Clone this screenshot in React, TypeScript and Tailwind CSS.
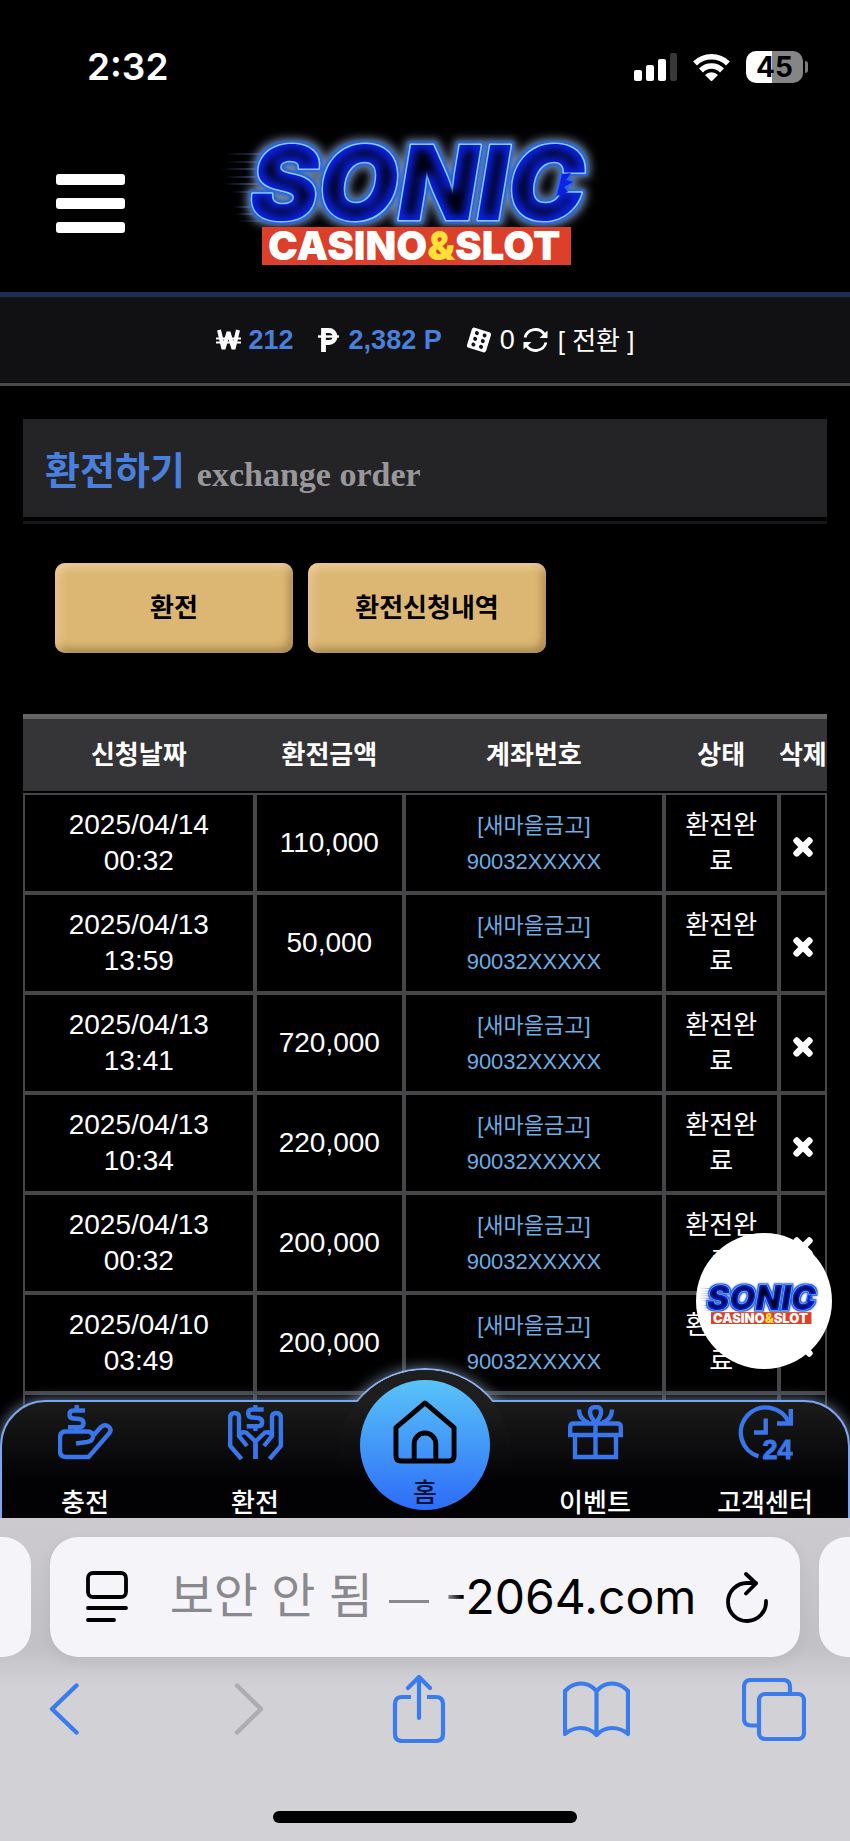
import React, { useId } from 'react';
import { FaTimes } from 'react-icons/fa';

const rows = [
  { date: '2025/04/14', time: '00:32', amount: '110,000' },
  { date: '2025/04/13', time: '13:59', amount: '50,000' },
  { date: '2025/04/13', time: '13:41', amount: '720,000' },
  { date: '2025/04/13', time: '10:34', amount: '220,000' },
  { date: '2025/04/13', time: '00:32', amount: '200,000' },
  { date: '2025/04/10', time: '03:49', amount: '200,000' },
];

function Logo({ className }: { className: string }) {
  const id = useId();
  return (
    <svg viewBox="0 0 400 144" className={className} role="img" aria-label="SONIC CASINO&SLOT">
      <defs>
        <filter id={`${id}neon`} x="-10%" y="-30%" width="120%" height="160%" colorInterpolationFilters="sRGB">
          <feMorphology in="SourceAlpha" operator="dilate" radius="4" />
          <feGaussianBlur stdDeviation="4" result="haloShape" />
          <feFlood floodColor="#6f829f" />
          <feComposite in2="haloShape" operator="in" result="halo" />
          <feMorphology in="SourceAlpha" operator="dilate" radius="2" />
          <feGaussianBlur stdDeviation="1" result="rimShape" />
          <feFlood floodColor="#2b68e0" />
          <feComposite in2="rimShape" operator="in" result="rim" />
          <feMorphology in="SourceAlpha" operator="erode" radius="6" />
          <feGaussianBlur stdDeviation="4" result="coreShape" />
          <feFlood floodColor="#00000f" />
          <feComposite in2="coreShape" operator="in" result="core" />
          <feMerge>
            <feMergeNode in="halo" />
            <feMergeNode in="rim" />
            <feMergeNode in="SourceGraphic" />
            <feMergeNode in="core" />
          </feMerge>
        </filter>
        <linearGradient id={`${id}streak`}>
          <stop offset="0" stopColor="#3b4a86" stopOpacity="0" />
          <stop offset="1" stopColor="#3b4a86" />
        </linearGradient>
      </defs>
      <g fill={`url(#${id}streak)`}>
        <rect x="0" y="31" width="50" height="2" />
        <rect x="2" y="39" width="44" height="2" />
        <rect x="-4" y="46" width="44" height="2" />
        <rect x="0" y="54" width="38" height="2" />
        <rect x="-2" y="61" width="36" height="2" />
        <rect x="6" y="69" width="30" height="2" />
        <rect x="8" y="84" width="20" height="2" />
        <rect x="10" y="91" width="20" height="2" />
        <rect x="12" y="98" width="40" height="2" />
      </g>
      <g filter={`url(#${id}neon)`} fill="#0c22e6" stroke="#8fd6ff" strokeWidth="3" strokeLinejoin="round" style={{ paintOrder: 'stroke' }}>
        <text x="25" y="98" fontSize="103" fontWeight="900" fontStyle="italic" fontFamily="Inter, sans-serif">SONIC</text>
        <path d="M337 52l9-1-5 7 7 2-9 5 4 5-11 4z" stroke="none" />
      </g>
      <rect x="37" y="105" width="309" height="38" fill="#dc3f2a" />
      <text x="43" y="138" fontSize="40" fontWeight="900" fontFamily="Inter, sans-serif" fill="#fff">
        CASINO<tspan fill="#ffdf3a">&amp;</tspan>SLOT
      </text>
    </svg>
  );
}

function StatusBar() {
  return (
    <div className="flex h-[134px] items-center justify-between pl-[87px] pr-[42px] text-white">
      <time className="font-['Inter',sans-serif] text-[37px] font-semibold leading-10">2:32</time>
      <div className="flex items-center gap-4">
        <svg width="43" height="28" viewBox="0 0 43 28" fill="#fff">
          <rect x="0" y="17" width="8" height="11" rx="2" />
          <rect x="12" y="12" width="8" height="16" rx="2" />
          <rect x="24" y="6" width="8" height="22" rx="2" />
          <rect x="36" y="0" width="7" height="28" rx="2" fill="#38383a" />
        </svg>
        <svg width="37" height="28" viewBox="0 0 37 28" fill="none" stroke="#fff" strokeWidth="5.500">
          <path d="M2 10.500a23.500 23.500 0 0 1 33 0" />
          <path d="M8 17.500a14.500 14.500 0 0 1 21 0" />
          <path d="M12 22a9 9 0 0 1 13 0L18.500 28.500z" fill="#fff" stroke="none" />
        </svg>
        <div className="flex items-center gap-0.5">
          <span className="flex h-8 w-[57px] items-center justify-center rounded-[10px] bg-[linear-gradient(90deg,#fff_46%,#858585_46%)] font-['Inter',sans-serif] text-[28px] font-bold leading-8 text-black">45</span>
          <span className="h-3 w-[3px] rounded-r-full bg-[#7c7c7c]" />
        </div>
      </div>
    </div>
  );
}

function WonIcon() {
  return (
    <svg width="25" height="22" viewBox="0 0 25 22" fill="none" stroke="#fff">
      <path d="M3 1l4.500 19L12.500 3l5 17L22 1" strokeWidth="4" strokeLinejoin="bevel" />
      <path d="M0 9.500h25M0 13.500h25" strokeWidth="1.800" />
    </svg>
  );
}

function PesoIcon() {
  return (
    <svg width="21" height="24" viewBox="0 0 21 24" fill="none" stroke="#fff">
      <path d="M5.500 24V2.500H11a5 5 0 0 1 0 12H5.500" strokeWidth="4.800" />
      <path d="M0 8.500h21" strokeWidth="2.400" />
    </svg>
  );
}

function DiceIcon() {
  return (
    <svg width="26" height="26" viewBox="0 0 26 26">
      <g transform="rotate(17 13 13)">
        <rect x="3" y="2.500" width="20" height="21" rx="2.500" fill="#fff" />
        <g fill="#111013">
          <circle cx="9" cy="7" r="2" /><circle cx="17" cy="7" r="2" />
          <circle cx="9" cy="13" r="2" /><circle cx="17" cy="13" r="2" />
          <circle cx="9" cy="19" r="2" /><circle cx="17" cy="19" r="2" />
        </g>
      </g>
    </svg>
  );
}

function SyncIcon() {
  return (
    <svg width="25" height="24" viewBox="0 0 25 24" fill="none" stroke="#fff" strokeWidth="2.800">
      <path d="M2 9.500A10.800 10.800 0 0 1 21.500 6.500" />
      <path d="M23 14.500A10.800 10.800 0 0 1 3.500 17.500" />
      <path d="M24.500 2.500V10H16.500z" fill="#fff" stroke="none" />
      <path d="M.5 21.500V14H8.500z" fill="#fff" stroke="none" />
    </svg>
  );
}

const dollar =
  'M18.700 0v4M18.700 22v5M27 5.500H15.500q-4 0-4 4t4 4l6 .5q4 .5 4 4.200t-4 4H10';

function DepositIcon() {
  return (
    <svg width="55" height="55" viewBox="0 0 55 55" fill="none" stroke="#3976ea" strokeWidth="4.400">
      <path d={dollar} />
      <path d="M18 38.500l11-1.500q6-1 6-5.500t-5-5H8q-6 0-6 6V46q0 6 6 6h22.500L51.500 28q2.500-4-1-6.500t-7.500.5L34 32" />
    </svg>
  );
}

function WithdrawIcon() {
  const hand = 'M13.500 54L2.200 41V12.500q0-4.500 4.500-4.500t4.300 4.500V31L19 41M11 31q2-5 7-3.500l9.500 9V54';
  return (
    <svg width="55" height="55" viewBox="0 0 55 55" fill="none" stroke="#3976ea" strokeWidth="4.400">
      <path d={dollar} transform="translate(8.700 -1)" />
      <path d={hand} />
      <path d={hand} transform="matrix(-1 0 0 1 55 0)" />
    </svg>
  );
}

function GiftIcon() {
  return (
    <svg width="55" height="55" viewBox="0 0 55 55" fill="none" stroke="#3976ea" strokeWidth="4.400">
      <path d="M2.200 30V22q0-3.500 3.500-3.500h43.600q3.500 0 3.500 3.500v8zM7 31v21h41V31M27.500 19v33" />
      <path d="M27.500 17.500q-5.500-6-5.500-10.500t5.500-5 5.500 5-5.500 10.500M11 4.500q0 10 9.500 13M44 4.500q0 10-9.500 13" />
    </svg>
  );
}

function SupportIcon() {
  return (
    <svg width="55" height="55" viewBox="0 0 55 55" fill="none" stroke="#3976ea" strokeWidth="4.400">
      <path d="M20.500 51.300A25 25 0 1 1 51 18M52.800 4v14.500H39M27.700 13.500v14H16" />
      <text x="24.500" y="54" fontSize="27" fontWeight="700" fontFamily="Liberation Sans, sans-serif" fill="#3976ea" stroke="#3976ea" strokeWidth="1">24</text>
    </svg>
  );
}

const navLabel = 'text-[26px] font-medium leading-[30px] text-white';

function NavItem({ label, children }: { label: string; children: React.ReactNode }) {
  return (
    <a href="#" className="flex flex-1 flex-col items-center justify-between pt-[5px]">
      {children}
      <span className={navLabel}>{label}</span>
    </a>
  );
}

function BottomNav() {
  return (
    <nav className="absolute inset-x-0 bottom-0 h-[118px]">
      <div className="absolute -inset-x-4 -top-16 bottom-0 overflow-hidden px-4">
        <div className="absolute left-1/2 top-8 size-[178px] -translate-x-1/2 rounded-full border-2 border-[#8fb2ee] shadow-[0_0_14px_#6f7f98]" />
        <div className="relative mt-16 h-[160px] rounded-t-[46px] border-2 border-[#7ea6ee] bg-[linear-gradient(#1b1b1c,#020204_80px)] shadow-[0_0_14px_#6f7f98]" />
        <div className="absolute left-1/2 top-[34px] size-[174px] -translate-x-1/2 rounded-full bg-[linear-gradient(#1e1e1f_32px,#020204_112px)]" />
      </div>
      <div className="relative flex h-full">
        <NavItem label="충전"><DepositIcon /></NavItem>
        <NavItem label="환전"><WithdrawIcon /></NavItem>
        <div className="flex flex-1 justify-center">
          <a href="#" className="-mt-5 flex size-[130px] flex-col items-center rounded-full bg-[linear-gradient(#59c4f8,#2d6cf8)] pt-5 text-black">
            <svg width="64" height="65" viewBox="0 0 64 65" fill="none" stroke="#000" strokeWidth="5" strokeLinejoin="round">
              <path d="M2.500 28L32 3l29.500 25v29q0 5-5 5h-49q-5 0-5-5z" />
              <path d="M21 62V44.500a11 11 0 0 1 22 0V62" />
            </svg>
            <span className="mt-3 text-[26px] font-medium leading-[34px] text-[#061238]">홈</span>
          </a>
        </div>
        <NavItem label="이벤트"><GiftIcon /></NavItem>
        <NavItem label="고객센터"><SupportIcon /></NavItem>
      </div>
    </nav>
  );
}

function BrowserBar() {
  const tool = 'flex h-[68px] w-[68px] items-center justify-center';
  return (
    <footer className="relative flex h-[323px] shrink-0 flex-col overflow-hidden bg-[#d2d1d5] bg-[linear-gradient(#cdcbcf,#c2c1c5_110px,#c2c1c5_130px,#d2d1d5_170px)] pt-[19px]">
      <div className="flex h-[120px] gap-[19px]">
        <div className="w-[31px] rounded-r-[28px] bg-[#f5f4f9]" />
        <div className="flex min-w-0 flex-1 items-center rounded-[28px] bg-[#f5f4f9] pl-9 pr-8 shadow-[0_4px_14px_rgba(0,0,0,0.06)]">
          <button type="button" aria-label="Page menu">
            <svg width="42" height="52" viewBox="0 0 42 52" fill="none" stroke="#000" strokeWidth="3.800" strokeLinecap="round">
              <rect x="2" y="2" width="38" height="24" rx="5" />
              <path d="M2 37h38M2 49h26" />
            </svg>
          </button>
          <div className="flex flex-1 items-center justify-center gap-4 whitespace-nowrap pl-3 text-[48px] leading-[60px]">
            <span className="text-[#8a898e]">보안 안 됨</span>
            <span className="h-[3px] w-10 translate-y-1 bg-[#8a898e]" />
            <span className="font-['Inter',sans-serif] text-black"><span className="bg-linear-to-r from-[#b0b0b3] to-black bg-clip-text text-transparent">-</span>2064.com</span>
          </div>
          <button type="button" aria-label="Reload">
            <svg width="42" height="52" viewBox="0 0 42 52" fill="none" stroke="#000" strokeWidth="3.800" strokeLinecap="round" strokeLinejoin="round">
              <path d="M40 30A19 19 0 1 1 21 12h9M20 3l10 9.500L20 22.500" />
            </svg>
          </button>
        </div>
        <div className="w-[31px] rounded-l-[28px] bg-[#f5f4f9]" />
      </div>
      <div className="flex items-center justify-between pl-[30px] pr-[42px] pt-[18px]">
        <button type="button" aria-label="Back" className={tool}>
          <svg width="30" height="52" viewBox="0 0 30 52" fill="none" stroke="#3b7cec" strokeWidth="4.400" strokeLinecap="round" strokeLinejoin="round"><path d="M27.500 2.500L3 26l24.500 23.500" /></svg>
        </button>
        <button type="button" aria-label="Forward" className={tool}>
          <svg width="44" height="52" viewBox="0 0 44 52" fill="none" stroke="#adacb0" strokeWidth="4.400" strokeLinecap="round" strokeLinejoin="round"><path d="M17 2.500L41 26 17 49.500" /></svg>
        </button>
        <button type="button" aria-label="Share" className={tool}>
          <svg width="54" height="68" viewBox="0 0 54 68" fill="none" stroke="#3b7cec" strokeWidth="4.200" strokeLinejoin="round">
            <path d="M19 22H10q-7 0-7 7v30q0 7 7 7h34q7 0 7-7V29q0-7-7-7h-9" />
            <path d="M27 43V3M16 13L27 2l11 11" strokeLinecap="round" />
          </svg>
        </button>
        <button type="button" aria-label="Bookmarks" className={tool}>
          <svg width="67" height="56" viewBox="0 0 67 56" fill="none" stroke="#3b7cec" strokeWidth="4.200" strokeLinecap="round" strokeLinejoin="round">
            <path d="M33.500 10Q27 2.500 18 2.500T2 10V53q7-6 16-6t15.500 7Q40 47 49 47t16 6V10q-7-7.500-16-7.500T33.500 10V54" />
          </svg>
        </button>
        <button type="button" aria-label="Tabs" className={tool}>
          <svg width="64" height="63" viewBox="0 0 64 63" fill="none" stroke="#3b7cec" strokeWidth="4.200">
            <rect x="17" y="16" width="45" height="45" rx="6" />
            <path d="M17 47.500H9q-7 0-7-7V9q0-7 7-7h32q7 0 7 7v7" />
          </svg>
        </button>
      </div>
      <div className="mx-auto mt-[68px] h-3 w-[304px] rounded-full bg-black" />
    </footer>
  );
}

export default function App() {
  const th = 'h-[79px] border-b-2 border-t-[5px] border-b-black border-t-[#656467] bg-[#353437] p-0 text-[26px] font-bold leading-9';
  const td = 'h-[100px] border-2 border-[#464548] p-0';
  const goldButton =
    "h-[90px] w-[238px] rounded-[10px] bg-[#dcb774] text-[26px] font-bold leading-9 text-black shadow-[inset_3px_4px_8px_rgba(255,225,190,0.6),inset_-3px_-4px_8px_rgba(110,80,30,0.55)]";
  return (
    <div className="flex h-screen flex-col overflow-hidden bg-black font-['Liberation_Sans','Noto_Sans_CJK_KR',sans-serif]">
      <div className="relative flex min-h-0 flex-1 flex-col overflow-hidden">
        <StatusBar />
        <header className="relative flex h-[163px] shrink-0 justify-center border-b-[5px] border-[#1c2b57]">
          <button type="button" aria-label="Menu" className="absolute left-14 top-10 flex flex-col gap-[13px]">
            <span className="h-[11px] w-[69px] rounded-[3px] bg-white" />
            <span className="h-[11px] w-[69px] rounded-[3px] bg-white" />
            <span className="h-[11px] w-[69px] rounded-[3px] bg-white" />
          </button>
          <Logo className="-mt-3 h-[144px] w-[400px] overflow-visible" />
        </header>
        <div className="flex h-[89px] shrink-0 items-center justify-center border-b-[3px] border-[#48474a] bg-[#111013] text-[27px] leading-9 text-white">
          <WonIcon />
          <b className="ml-2 mr-6 text-[#4a80dd]">212</b>
          <PesoIcon />
          <b className="ml-2.5 mr-6 text-[#4a80dd]">2,382 P</b>
          <DiceIcon />
          <span className="mx-2">0</span>
          <SyncIcon />
          <button type="button" className="ml-2.5 pt-0.5 text-[26px]">[ 전환 ]</button>
        </div>
        <main className="px-[23px] pt-[33px] text-white">
          <div className="border-b-[3px] border-[#161518] pb-1">
            <h1 className="flex h-[98px] items-center gap-3 bg-[#242326] pl-[22px] pt-1.5 text-[38px] font-bold leading-[52px] text-[#4a80dd]">
              환전하기
              <small className="mt-2 font-['Liberation_Serif',serif] text-[34px] leading-10 text-[#98979a]">exchange order</small>
            </h1>
          </div>
          <div className="mt-[39px] flex gap-[15px] pl-8">
            <button type="button" className={goldButton}>환전</button>
            <button type="button" className={goldButton}>환전신청내역</button>
          </div>
          <table className="mt-[61px] w-full table-fixed border-separate border-spacing-0 text-center">
            <colgroup>
              <col className="w-[28.800%]" />
              <col className="w-[18.600%]" />
              <col className="w-[32.300%]" />
              <col className="w-[14.300%]" />
              <col className="w-[6%]" />
            </colgroup>
            <thead>
              <tr>
                <th className={th}>신청날짜</th>
                <th className={th}>환전금액</th>
                <th className={th}>계좌번호</th>
                <th className={th}>상태</th>
                <th className={`${th} whitespace-nowrap`}>삭제</th>
              </tr>
            </thead>
            <tbody>
              {rows.map((row) => (
                <tr key={row.date + row.time}>
                  <td className={`${td} text-[28px] leading-9`}>{row.date}<br />{row.time}</td>
                  <td className={`${td} text-[28px] leading-9`}>{row.amount}</td>
                  <td className={`${td} pt-0.5 text-[22px] leading-9 text-[#6eaee4]`}>[새마을금고]<br />90032XXXXX</td>
                  <td className={`${td} px-4 text-[26px] leading-9 break-all`}>환전완료</td>
                  <td className={td}>
                    <button type="button" aria-label="삭제" className="mt-2 align-middle">
                      <FaTimes size={26} stroke="currentColor" strokeWidth={36} />
                    </button>
                  </td>
                </tr>
              ))}
              <tr>
                <td className={td} /><td className={td} /><td className={td} /><td className={td} /><td className={td} />
              </tr>
            </tbody>
          </table>
        </main>
        <BottomNav />
        <a href="#" className="absolute bottom-[149px] right-[18px] flex size-[136px] items-center justify-center rounded-full bg-white">
          <Logo className="w-[130px]" />
        </a>
      </div>
      <BrowserBar />
    </div>
  );
}
